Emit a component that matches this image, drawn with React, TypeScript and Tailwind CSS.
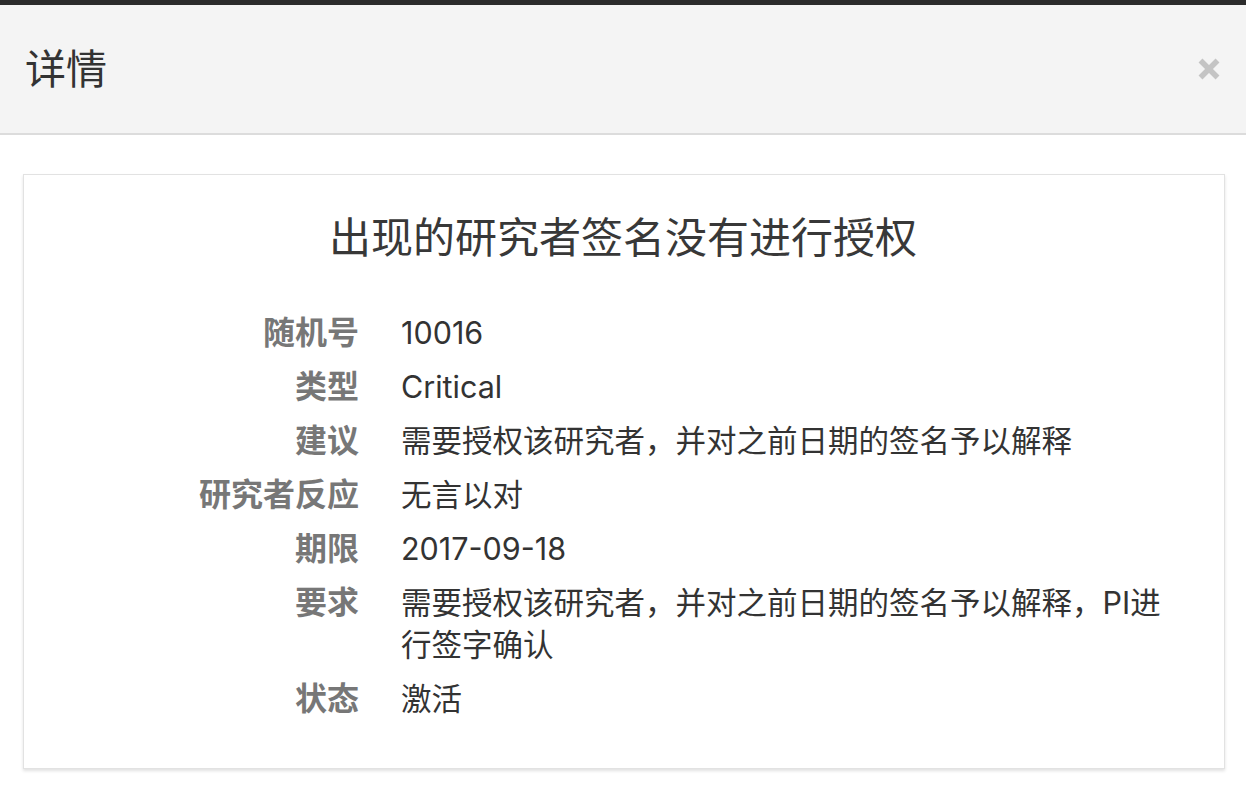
import React from "react";

const rows: { label: string; value: string }[] = [
  { label: "随机号", value: "10016" },
  { label: "类型", value: "Critical" },
  { label: "建议", value: "需要授权该研究者，并对之前日期的签名予以解释" },
  { label: "研究者反应", value: "无言以对" },
  { label: "期限", value: "2017-09-18" },
  { label: "要求", value: "需要授权该研究者，并对之前日期的签名予以解释，PI进行签字确认" },
  { label: "状态", value: "激活" },
];

export default function App() {
  return (
    <div
      className="min-h-screen w-full bg-white"
      style={{ fontFamily: 'Inter, "Noto Sans CJK SC", sans-serif' }}
    >
      <div className="h-[5px] bg-[#2b2b2b]" />
      <header className="flex h-[130px] items-center justify-between border-b-2 border-[#dcdcdc] bg-[#f4f4f4] pl-[25px] pr-[26px]">
        <h1 className="text-[41px] leading-none font-normal text-[#333]">详情</h1>
        <button aria-label="close" className="flex h-[22px] w-[22px] items-center justify-center">
          <svg width="22" height="22" viewBox="0 0 22 22">
            <line x1="2.5" y1="2.5" x2="19.5" y2="19.5" stroke="#c4c4c4" strokeWidth="5.5" />
            <line x1="19.5" y1="2.5" x2="2.5" y2="19.5" stroke="#c4c4c4" strokeWidth="5.5" />
          </svg>
        </button>
      </header>
      <main className="pl-[23px] pr-[21px] pt-[39px]">
        <section className="border border-[#e2e2e2] bg-white pt-[42px] pb-[48px] pr-[48px] shadow-[0_2px_3px_rgba(0,0,0,0.12)]">
          <h2 className="pl-[46px] text-center text-[42px] leading-[42px] font-normal text-[#383838]">
            出现的研究者签名没有进行授权
          </h2>
          <dl className="mt-[53px] grid grid-cols-[335px_1fr] gap-x-[42px] gap-y-[12px]">
            {rows.map((r) => (
              <React.Fragment key={r.label}>
                <dt className="text-right text-[32px] leading-[42px] font-bold text-[#777]">{r.label}</dt>
                <dd className="text-[30.5px] leading-[42px] text-[#333]">{r.value}</dd>
              </React.Fragment>
            ))}
          </dl>
        </section>
      </main>
    </div>
  );
}
